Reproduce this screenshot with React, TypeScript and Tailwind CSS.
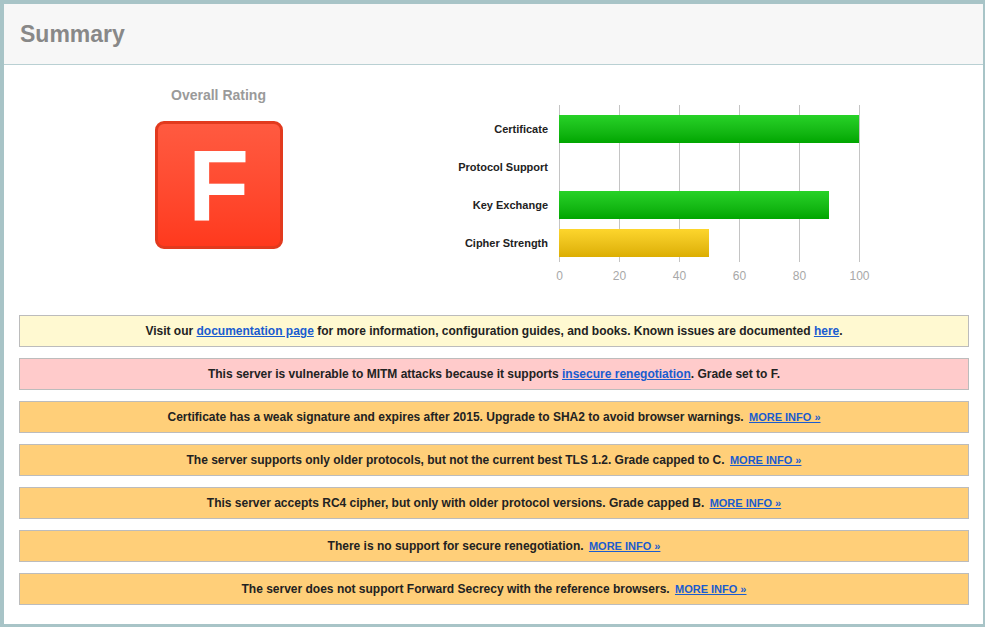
import React from 'react'

const font = { fontFamily: '"Liberation Sans", Arial, sans-serif' }

const bars = [
  { label: 'Certificate', value: 100, color: 'bg-gradient-to-b from-[#27d227] to-[#00a600]' },
  { label: 'Protocol Support', value: 0, color: 'bg-gradient-to-b from-[#27d227] to-[#00a600]' },
  { label: 'Key Exchange', value: 90, color: 'bg-gradient-to-b from-[#27d227] to-[#00a600]' },
  { label: 'Cipher Strength', value: 50, color: 'bg-gradient-to-b from-[#fdd62c] to-[#dcae00]' },
]

const ticks = [0, 20, 40, 60, 80, 100]

type Warning = { kind: 'info' | 'error' | 'warn'; content: React.ReactNode }

const Link = ({ children }: { children: React.ReactNode }) => (
  <a href="#" className="text-[#1a5ccf] underline">
    {children}
  </a>
)

const MoreInfo = () => (
  <a href="#" className="ml-[2px] text-[11px] text-[#1a5ccf] underline">
    MORE INFO »
  </a>
)

const warnings: Warning[] = [
  {
    kind: 'info',
    content: (
      <>
        Visit our <Link>documentation page</Link> for more information, configuration guides, and books. Known issues are
        documented <Link>here</Link>.
      </>
    ),
  },
  {
    kind: 'error',
    content: (
      <>
        This server is vulnerable to MITM attacks because it supports <Link>insecure renegotiation</Link>. Grade set to F.
      </>
    ),
  },
  {
    kind: 'warn',
    content: (
      <>
        Certificate has a weak signature and expires after 2015. Upgrade to SHA2 to avoid browser warnings. <MoreInfo />
      </>
    ),
  },
  {
    kind: 'warn',
    content: (
      <>
        The server supports only older protocols, but not the current best TLS 1.2. Grade capped to C. <MoreInfo />
      </>
    ),
  },
  {
    kind: 'warn',
    content: (
      <>
        This server accepts RC4 cipher, but only with older protocol versions. Grade capped B. <MoreInfo />
      </>
    ),
  },
  {
    kind: 'warn',
    content: (
      <>
        There is no support for secure renegotiation. <MoreInfo />
      </>
    ),
  },
  {
    kind: 'warn',
    content: (
      <>
        The server does not support Forward Secrecy with the reference browsers. <MoreInfo />
      </>
    ),
  },
]

const boxColor = {
  info: 'bg-[#fff9d1]',
  error: 'bg-[#ffcbcb]',
  warn: 'bg-[#ffcf79]',
}

function Chart() {
  return (
    <div className="flex">
      {/* labels */}
      <div className="w-[142px] pt-[10px] pr-[11px]">
        {bars.map((b) => (
          <div key={b.label} className="mb-[10px] flex h-[28px] items-center justify-end text-[11px] font-bold text-[#222]">
            {b.label}
          </div>
        ))}
      </div>
      <div>
        <div className="relative h-[157px] w-[301px]">
          {ticks.map((t) => (
            <div
              key={t}
              className="absolute top-0 bottom-0 w-px bg-[#c4c4c4]"
              style={{ left: t * 3 }}
            />
          ))}
          <div className="relative pt-[10px]">
            {bars.map((b) => (
              <div key={b.label} className="mb-[10px] h-[28px]">
                {b.value > 0 && <div className={`h-full ${b.color}`} style={{ width: b.value * 3 }} />}
              </div>
            ))}
          </div>
        </div>
        <div className="relative mt-[5px] h-[16px] w-[301px] text-[12px] text-[#a8a8a8]">
          {ticks.map((t) => (
            <span key={t} className="absolute top-0 -translate-x-1/2" style={{ left: t * 3 + 0.5 }}>
              {t}
            </span>
          ))}
        </div>
      </div>
    </div>
  )
}

export default function App() {
  return (
    <div style={font} className="h-[627px] w-[985px] overflow-hidden bg-[#a8c4c7]">
      <div className="ml-[4px] mt-[4px] h-[620px] w-[979px] bg-white">
        <div className="flex h-[61px] items-center border-b border-[#b9d0d3] bg-[#f7f7f7] pl-[16px]">
          <h1 className="text-[23px] font-bold text-[#888]">Summary</h1>
        </div>

        <div className="flex pt-[22px]">
          <div className="ml-[16px] flex w-[397px] flex-col items-center">
            <div className="text-[14px] font-bold leading-[16px] text-[#9a9a9a]">Overall Rating</div>
            <div className="mt-[18px] flex h-[128px] w-[128px] items-center justify-center rounded-[9px] border-[3px] border-[#e23a1e] bg-gradient-to-b from-[#ff5a40] to-[#ff391d]">
              <span className="text-[100px] leading-none font-bold text-white">F</span>
            </div>
          </div>
          <div className="mt-[18px]">
            <Chart />
          </div>
        </div>

        <div className="mt-[32px] flex flex-col gap-[11px] pl-[15px] pr-[14px]">
          {warnings.map((w, i) => (
            <div
              key={i}
              className={`flex h-[32px] items-center justify-center border border-[#bcbcbc] text-[12px] font-bold text-[#222] ${boxColor[w.kind]}`}
            >
              <span>{w.content}</span>
            </div>
          ))}
        </div>
      </div>
    </div>
  )
}
